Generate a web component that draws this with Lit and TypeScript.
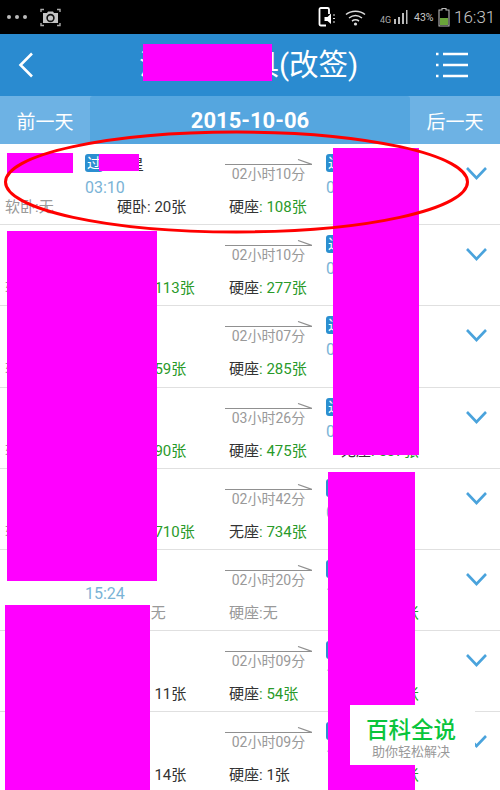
import { LitElement, html, css, svg } from "lit";
import { customElement } from "lit/decorators.js";

type Seat = [string, string];

interface Train {
  code: string;
  depart: string;
  arrive: string;
  duration: string;
  seats: Seat[];
}

const trains: Train[] = [
  { code: "星", depart: "03:10", arrive: "05:20", duration: "02小时10分", seats: [["软卧", "无"], ["硬卧", "20"], ["硬座", "108"], ["无座", "320"]] },
  { code: "", depart: "", arrive: "05:31", duration: "02小时10分", seats: [["软卧", "无"], ["硬卧", "113"], ["硬座", "277"], ["无座", "310"]] },
  { code: "", depart: "", arrive: "06:02", duration: "02小时07分", seats: [["软卧", "无"], ["硬卧", "59"], ["硬座", "285"], ["无座", "402"]] },
  { code: "", depart: "", arrive: "07:46", duration: "03小时26分", seats: [["软卧", "无"], ["硬卧", "90"], ["硬座", "475"], ["无座", "537"]] },
  { code: "", depart: "", arrive: "09:12", duration: "02小时42分", seats: [["软卧", "无"], ["硬卧", "710"], ["无座", "734"], ["", ""]] },
  { code: "", depart: "15:24", arrive: "17:44", duration: "02小时20分", seats: [["软卧", "无"], ["硬卧", "无"], ["硬座", "无"], ["无座", "128"]] },
  { code: "", depart: "", arrive: "18:20", duration: "02小时09分", seats: [["软卧", "无"], ["硬卧", "11"], ["硬座", "54"], ["无座", "211"]] },
  { code: "", depart: "", arrive: "19:05", duration: "02小时09分", seats: [["软卧", "无"], ["硬卧", "14"], ["硬座", "1"], ["无座", "146"]] },
];

const masks = [
  [143, 44, 129, 37],
  [7, 153, 66, 20],
  [99, 154, 40, 17],
  [7, 231, 150, 350],
  [5, 605, 145, 185],
  [333, 148, 86, 307],
  [328, 472, 87, 318],
];

const seatCell = ([label, count]: Seat) => {
  if (!label) return html`<span></span>`;
  if (count === "无") return html`<span class="seat none">${label}:无</span>`;
  const plenty = Number(count) > 20;
  return html`<span class="seat">${label}<span class=${plenty ? "plenty" : ""}>: ${count}张</span></span>`;
};

const chevron = svg`<path d="M2 2 L11.5 12 L21 2" fill="none" stroke="#4aa3dc" stroke-width="2.6"/>`;

@customElement("app-root")
export class AppRoot extends LitElement {
  static styles = css`
    :host {
      display: block;
      position: relative;
      width: 500px;
      height: 790px;
      overflow: hidden;
      background: #fff;
      font-family: Roboto, "Noto Sans CJK SC", sans-serif;
    }
    .status {
      height: 34px;
      background: #000;
      display: flex;
      align-items: center;
      color: #c8c8c8;
    }
    .status svg { display: block; flex: none; }
    .dots { margin-left: 6px; }
    .cam { margin-left: 10px; }
    .spacer { flex: 1; }
    .phone { margin-right: 9px; }
    .net { font-size: 9px; margin: 5px 0 0 14px; width: 13px; color: #aaa; }
    .pct { font-size: 10.5px; margin: 0 4px 0 6px; width: 20px; white-space: nowrap; }
    .clock { font-size: 17px; font-weight: 300; margin: 0 6px 0 4px; width: 40px; white-space: nowrap; }
    .header {
      height: 62px;
      background: #2a8bd0;
      display: grid;
      grid-template-columns: 121px 1fr 32px;
      align-items: center;
      padding: 0 32px 0 18px;
      color: #fff;
    }
    .title { font-size: 28px; line-height: 60px; white-space: nowrap; }
    .route { font-size: 29.5px; }
    .datebar {
      height: 48px;
      display: grid;
      grid-template-columns: 90px 1fr 90px;
      background: #6db2e4;
      color: #fff;
      align-items: stretch;
    }
    .side { font-size: 19px; display: flex; align-items: center; justify-content: center; }
    .date {
      background: #55a6df;
      border-radius: 3px 3px 0 0;
      font-size: 22px;
      font-weight: 700;
      padding-top: 1px;
      display: flex;
      align-items: center;
      justify-content: center;
    }
    .row {
      height: 81.2px;
      box-sizing: border-box;
      border-bottom: 1px solid #e0e0e0;
      padding-left: 5px;
    }
    .top {
      height: 54px;
      display: grid;
      grid-template-columns: 80px 140px 101px 139px 24px;
    }
    .train { padding-top: 10px; }
    .tagline { display: flex; height: 18px; align-items: center; }
    .tag {
      width: 18px;
      height: 18px;
      background: #2b8fd0;
      border-radius: 3px;
      color: #fff;
      font-size: 14px;
      line-height: 18px;
      text-align: center;
    }
    .code { font-size: 15px; color: #333; margin-left: 26px; }
    .time { font-size: 16px; line-height: 20px; margin-top: 6px; color: #7ab3d6; }
    .mid { padding-top: 15px; }
    .mid svg { display: block; }
    .dur { font-size: 14px; line-height: 18px; color: #999; width: 87px; text-align: center; white-space: nowrap; }
    .chev { padding-top: 22px; }
    .chev svg { display: block; }
    .seats { display: grid; grid-template-columns: repeat(4, 112px); }
    .seat { font-size: 15px; line-height: 18px; color: #333; white-space: nowrap; }
    .none { color: #999; }
    .plenty { color: #2a9a2a; }
    .mask { position: absolute; background: #ff00ff; }
    .ellipse { position: absolute; left: 0; top: 0; pointer-events: none; }
    .mark {
      position: absolute;
      left: 350px;
      top: 705px;
      width: 125px;
      height: 60px;
      background: #fff;
      text-align: center;
    }
    .mark-a { font-size: 22.5px; line-height: 26px; margin: 12px 3px 0 0; color: #0ac53c; font-weight: 500; }
    .mark-b { font-size: 13px; line-height: 16px; margin: 1px 3px 0 0; color: #999; }
  `;

  private statusBar() {
    return html`<div class="status">
      <svg class="dots" width="24" height="6" viewBox="0 0 24 6"><circle cx="3" cy="3" r="2" fill="#bbb"/><circle cx="11" cy="3" r="2" fill="#bbb"/><circle cx="19" cy="3" r="2" fill="#bbb"/></svg>
      <svg class="cam" width="21" height="19" viewBox="0 0 21 19">
        <path d="M1 4V1.500H4M17 1.500H20V4M1 15V17.500H4M17 17.500H20V15" fill="none" stroke="#aaa" stroke-width="1.400"/>
        <path d="M3 5H7L8 3.500H13L14 5H18V15H3Z" fill="#c4c4c4"/>
        <circle cx="10.500" cy="10" r="3.400" fill="none" stroke="#111" stroke-width="1.600"/>
      </svg>
      <div class="spacer"></div>
      <svg class="phone" width="18" height="20" viewBox="0 0 18 20">
        <path d="M3 1H9.500C10.500 1 11 1.500 11 2.500V7M8 18.500H3C2 18.500 1.500 18 1.500 17V2.500C1.500 1.500 2 1 3 1" fill="none" stroke="#fff" stroke-width="1.800"/>
        <path d="M6.500 10H9.500L13 6.500V17L9.500 14H6.500Z" fill="#fff"/>
        <path d="M15 8H17M15 11.500H17M15 15H17" stroke="#ddd" stroke-width="1.200"/>
      </svg>
      <svg width="21" height="17" viewBox="0 0 21 17">
        <path d="M1 5.500C6 1 15 1 20 5.500M4 9C8 6 13 6 17 9M7 12C9 10.700 12 10.700 14 12" fill="none" stroke="#ddd" stroke-width="1.500"/>
        <circle cx="10.500" cy="15" r="1.600" fill="#ddd"/>
      </svg>
      <span class="net">4G</span>
      <svg width="15" height="16" viewBox="0 0 15 16"><path d="M1 10h2v5H1zM5 8h2v7H5zM9 4h2v11H9zM13 1h1.500v14H13z" fill="#bbb"/></svg>
      <span class="pct">43%</span>
      <svg width="12" height="20" viewBox="0 0 12 20">
        <path d="M4 1.500H8V3H11V19H1V3H4Z" fill="none" stroke="#bbb" stroke-width="1.100"/>
        <rect x="2" y="11" width="8" height="7" fill="#6aa53a"/>
      </svg>
      <span class="clock">16:31</span>
    </div>`;
  }

  private headerBar() {
    return html`<div class="header">
      <svg width="16" height="26" viewBox="0 0 16 26"><path d="M14 1.500L2.500 13L14 24.500" fill="none" stroke="#fff" stroke-width="2.600"/></svg>
      <div class="title">江西出行具<span class="route">(改签)</span></div>
      <svg width="32" height="26" viewBox="0 0 32 26">
        <path d="M7 2H32M7 13H32M7 24H32" stroke="#fff" stroke-width="2.600"/>
        <path d="M0 2H2.500M0 13H2.500M0 24H2.500" stroke="#fff" stroke-width="2.600"/>
      </svg>
    </div>`;
  }

  private trainRow(t: Train) {
    return html`<div class="row">
      <div class="top">
        <div></div>
        <div class="train">
          <div class="tagline"><span class="tag">过</span><span class="code">${t.code}</span></div>
          <div class="time">${t.depart}</div>
        </div>
        <div class="mid">
          <svg width="87" height="6" viewBox="0 0 87 6"><path d="M0 5.500H87L73 0.500" fill="none" stroke="#909090" stroke-width="1.200"/></svg>
          <div class="dur">${t.duration}</div>
        </div>
        <div class="train">
          <div class="tagline"><span class="tag">过</span></div>
          <div class="time">${t.arrive}</div>
        </div>
        <div class="chev"><svg width="23" height="14" viewBox="0 0 23 14">${chevron}</svg></div>
      </div>
      <div class="seats">${t.seats.map(seatCell)}</div>
    </div>`;
  }

  render() {
    return html`
      ${this.statusBar()}
      ${this.headerBar()}
      <div class="datebar">
        <div class="side">前一天</div>
        <div class="date">2015-10-06</div>
        <div class="side">后一天</div>
      </div>
      <div class="list">${trains.map((t) => this.trainRow(t))}</div>
      ${masks.map(([x, y, w, h]) => html`<div class="mask" style="left:${x}px;top:${y}px;width:${w}px;height:${h}px"></div>`)}
      <svg class="ellipse" width="500" height="790" viewBox="0 0 500 790">
        <ellipse cx="236.500" cy="182" rx="231" ry="50" fill="none" stroke="#f00" stroke-width="3"/>
      </svg>
      <div class="mark">
        <div class="mark-a">百科全说</div>
        <div class="mark-b">助你轻松解决</div>
      </div>
    `;
  }
}
